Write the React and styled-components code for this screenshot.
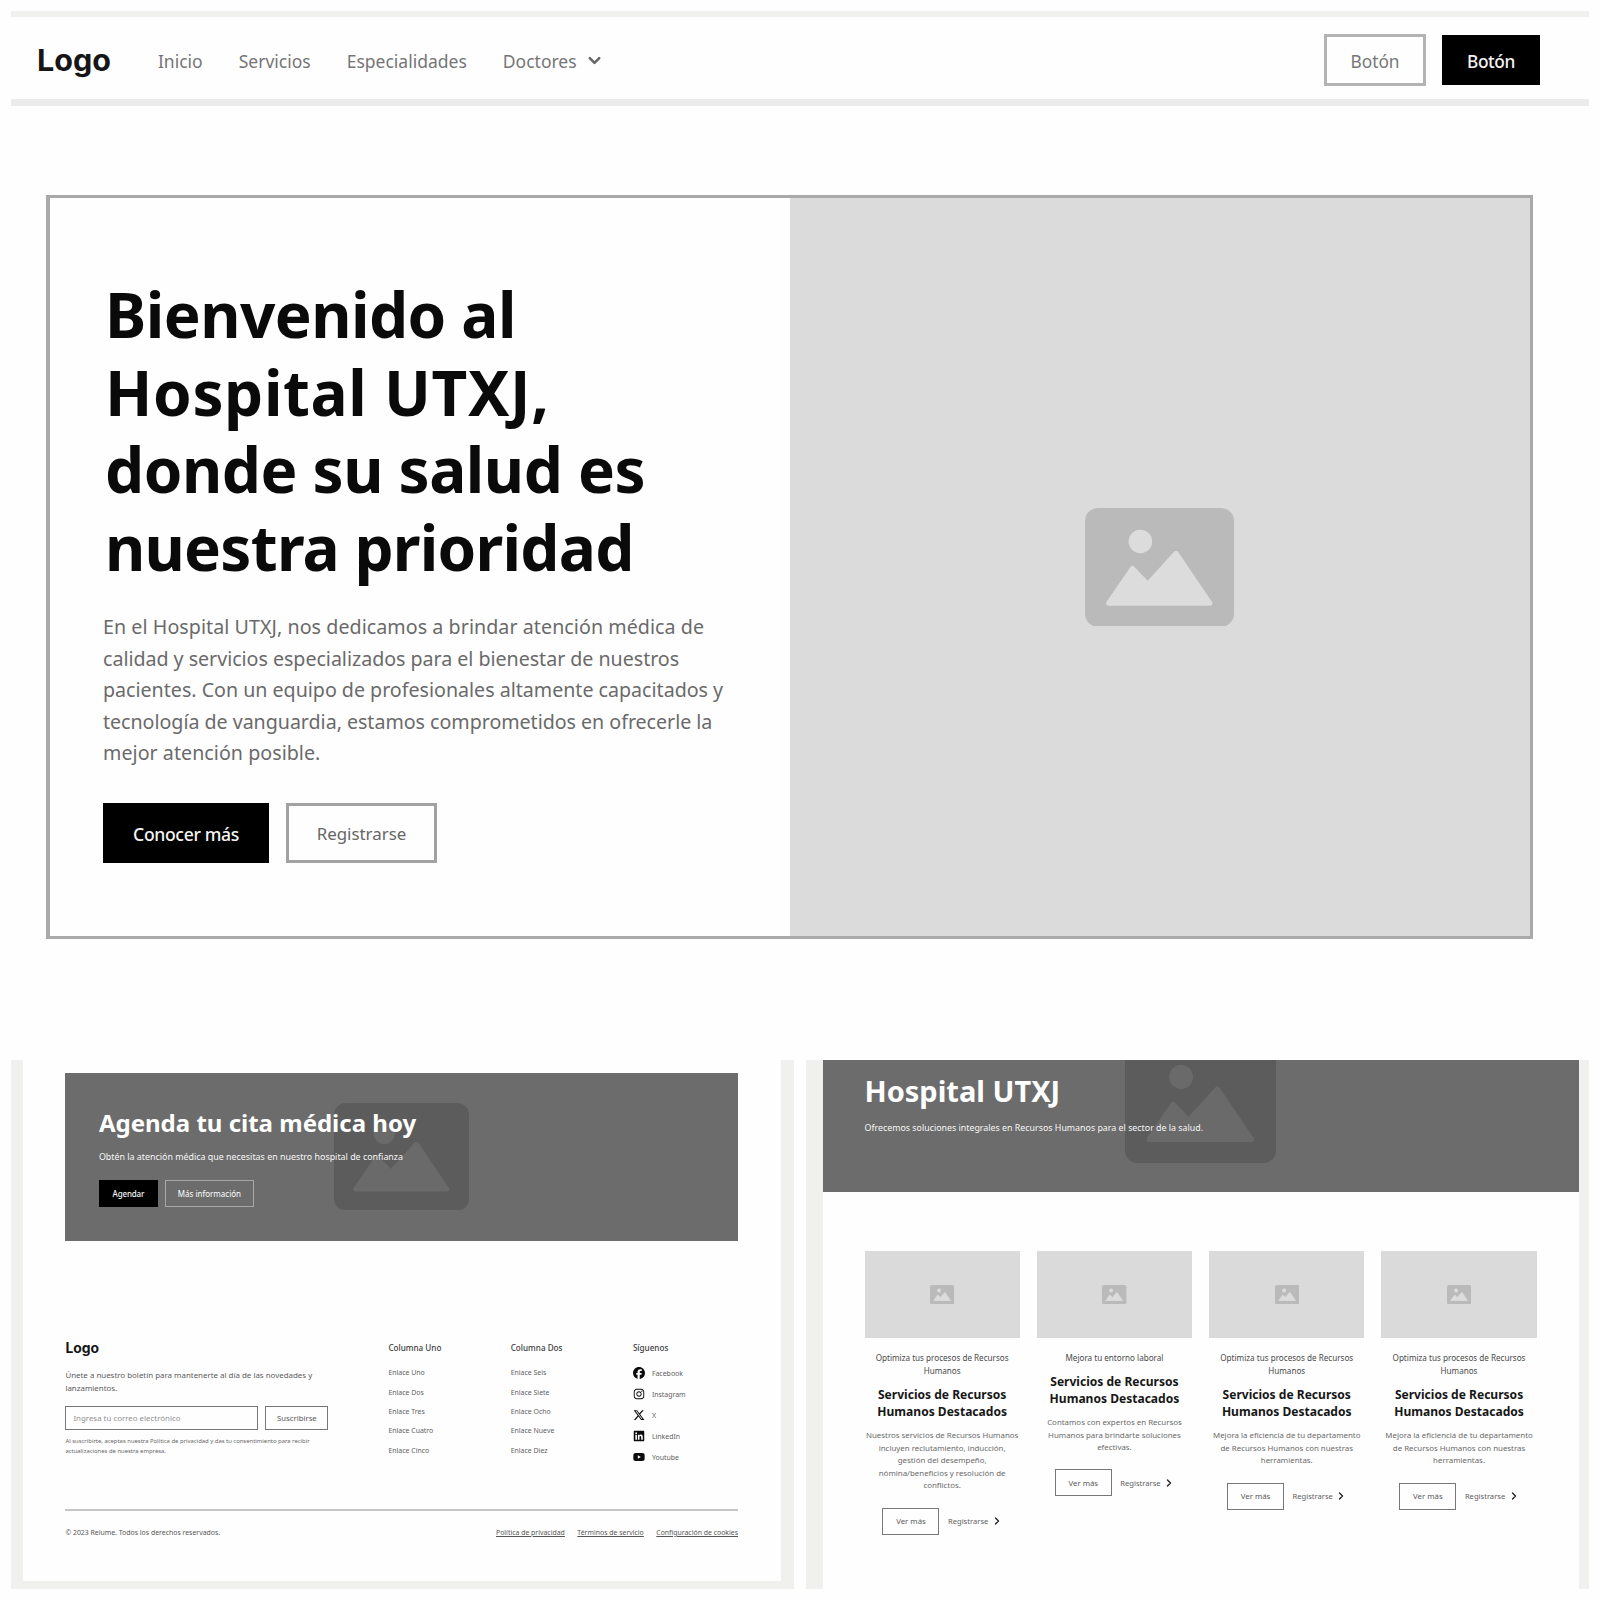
import React from "react";
import styled, { createGlobalStyle, css } from "styled-components";
import { ChevronDown, ChevronRight } from "lucide-react";
import { FaFacebook, FaInstagram, FaLinkedin, FaXTwitter, FaYoutube } from "react-icons/fa6";

const Global = createGlobalStyle`
  * { box-sizing: border-box; }
  body {
    margin: 0;
    background: #fefefe;
    color: #444;
    font-family: "Noto Sans", "Open Sans", sans-serif;
  }
  h1, h2, h3, h4, p, ul { margin: 0; padding: 0; }
  ul { list-style: none; }
  a { color: inherit; text-decoration: none; }
`;

const Board = styled.div`
  width: 1600px;
  height: 1600px;
  overflow: hidden;
  padding: 11px;
`;

/* ---------- shared ---------- */

const Logo = styled.span`
  display: block;
  font-family: "Inter", "Liberation Sans", sans-serif;
  font-weight: 700;
  font-size: ${(p) => p.$size}px;
  line-height: ${(p) => p.$size * 1.3}px;
  letter-spacing: ${(p) => p.$spacing || 0}px;
  color: #161616;
`;

const Line = styled.span`
  display: block;
  white-space: nowrap;
  letter-spacing: ${(p) => p.$spacing || 0}px;
`;

const Button = styled.button`
  display: flex;
  align-items: center;
  justify-content: center;
  flex: none;
  padding: ${(p) => p.$drop || 0}px 0 0;
  border-radius: 0;
  font-family: inherit;
  white-space: nowrap;
  width: ${(p) => p.$w}px;
  height: ${(p) => p.$h}px;
  font-size: ${(p) => p.$size}px;
  ${(p) =>
    p.$solid
      ? css`
          border: 0;
          background: #000;
          color: #f4f4f4;
          font-weight: 500;
          letter-spacing: -0.02em;
        `
      : css`
          border: ${p.$border || 1}px solid ${p.$line || "#777"};
          background: transparent;
          color: ${p.$ink || "#5a5a5a"};
        `}
`;

const Glyph = styled.svg`
  display: block;
  width: ${(p) => p.$w}px;
  height: ${(p) => (p.$w * 118) / 148}px;
`;

function ImageGlyph({ width, frame = "#bababa", art = "#dcdcdc" }) {
  return (
    <Glyph $w={width} viewBox="0 0 148 118" aria-hidden="true">
      <rect width="148" height="118" rx="13" fill={frame} />
      <circle cx="55" cy="33.3" r="11.7" fill={art} />
      <path
        d="M23.5 94.5 L47.2 60 L62.3 76 L90.5 45 L124 94.5 Z"
        fill={art}
        stroke={art}
        strokeWidth="5"
        strokeLinejoin="round"
      />
    </Glyph>
  );
}

/* ---------- navigation ---------- */

const TopStripe = styled.div`
  height: 6px;
  background: #f0f0ef;
`;

const NavBar = styled.header`
  display: flex;
  align-items: center;
  height: 89px;
  padding: 4px 49px 0 26px;
  border-bottom: 7px solid #ebebeb;
`;

const Menu = styled.nav`
  display: flex;
  gap: 36px;
  margin-left: 47px;
  padding-top: 1px;
  font-size: 17.5px;
  color: #757577;
`;

const MenuItem = styled.a`
  display: flex;
  align-items: center;
  gap: 8px;
`;

const NavActions = styled.div`
  display: flex;
  align-items: center;
  gap: 16px;
  margin-left: auto;
`;

/* ---------- hero ---------- */

const HeroArea = styled.section`
  height: 954px;
  padding: 89px 0 0 35px;
`;

const HeroCard = styled.div`
  display: grid;
  grid-template-columns: 740px 1fr;
  width: 1487px;
  height: 744px;
  border: 3px solid #a9a9a9;
  border-left-width: 4px;
`;

const HeroCopy = styled.div`
  padding: 78px 0 0 53px;
  background: #fefefe;
`;

const HeroTitle = styled.h1`
  padding-left: 2px;
  font-size: 62px;
  line-height: 77.6px;
  font-weight: 700;
  color: #0a0a0a;
`;

const HeroText = styled.p`
  margin-top: 24.6px;
  font-size: 19.65px;
  line-height: 31.6px;
  color: #6a6a6a;
`;

const HeroActions = styled.div`
  display: flex;
  gap: 17px;
  margin-top: 33.8px;
`;

const HeroImage = styled.div`
  display: flex;
  align-items: center;
  justify-content: center;
  padding-right: 2px;
  background: #dbdbdb;
`;

/* ---------- lower panels ---------- */

const Panels = styled.div`
  display: grid;
  grid-template-columns: 783px 783.5px;
  gap: 11.5px;
  height: 529px;
`;

const FooterPanel = styled.section`
  border: solid #f0f0ef;
  border-width: 0 13px 8px 12px;
  padding: 13px 43px 0 42.4px;
  background: #fefefe;
`;

const Banner = styled.div`
  position: relative;
  height: 168px;
  padding: 35px 0 0 33.5px;
  background: #6c6c6c;
  color: #f6f6f6;
`;

const Backdrop = styled.div`
  position: absolute;
  left: ${(p) => p.$x}px;
  top: ${(p) => p.$y}px;
`;

const Front = styled.div`
  position: relative;
`;

const BannerTitle = styled.h2`
  font-size: ${(p) => p.$size}px;
  line-height: ${(p) => p.$lh}px;
  font-weight: 700;
  white-space: nowrap;
  color: #fff;
`;

const BannerText = styled.p`
  margin-top: ${(p) => p.$gap}px;
  font-size: ${(p) => p.$size}px;
  line-height: 14px;
  white-space: nowrap;
`;

const BannerActions = styled.div`
  display: flex;
  gap: 7px;
  margin-top: 16px;
`;

const FooterGrid = styled.div`
  display: grid;
  grid-template-columns: 323px 122.3px 122.2px 1fr;
  height: 170px;
  margin-top: 98px;
`;

const Newsletter = styled.p`
  margin-top: 12px;
  font-size: 7.92px;
  line-height: 12.8px;
  color: #5c5c5c;
`;

const Form = styled.div`
  display: flex;
  gap: 7px;
  margin-top: 11.4px;
`;

const EmailField = styled.input`
  width: 193px;
  height: 24px;
  padding: 0 7px;
  border: 1px solid #777;
  border-radius: 0;
  background: transparent;
  font-family: inherit;
  font-size: 7.9px;
  &::placeholder { color: #929292; opacity: 1; }
`;

const Consent = styled.p`
  margin-top: 5.6px;
  font-size: 5.9px;
  line-height: 10.2px;
  color: #666;
`;

const Column = styled.div`
  padding-top: 3px;
`;

const ColumnTitle = styled.h4`
  font-size: 8.15px;
  line-height: 12px;
  font-weight: 500;
  color: #404040;
`;

const LinkList = styled.ul`
  margin-top: 9px;
  font-size: 6.95px;
  color: #5e5e5e;
`;

const LinkRow = styled.li`
  display: flex;
  align-items: center;
  gap: 7px;
  height: ${(p) => p.$h}px;
  svg { width: 12px; height: 12px; flex: none; color: #0c0c0c; }
`;

const FooterBottom = styled.div`
  display: flex;
  justify-content: space-between;
  padding-top: 17px;
  border-top: 2px solid #c6c6c6;
  font-size: 6.92px;
  line-height: 10px;
  white-space: nowrap;
  color: #555;
`;

const Legal = styled.div`
  display: flex;
  gap: 12.5px;
  a { text-decoration: underline; text-underline-offset: 1px; }
`;

/* ---------- services ---------- */

const ServicesPanel = styled.section`
  border: solid #f0f0ef;
  border-width: 0 10px 0 17px;
  background: #fefefe;
`;

const ServicesHero = styled.div`
  position: relative;
  overflow: hidden;
  height: 132px;
  padding: 13.5px 0 0 42px;
  background: #6c6c6c;
  color: #f6f6f6;
`;

const Cards = styled.div`
  display: grid;
  grid-template-columns: repeat(4, 155.3px);
  gap: 17px;
  padding: 59px 0 0 42px;
`;

const Card = styled.article`
  display: flex;
  flex-direction: column;
  align-items: center;
  text-align: center;
`;

const CardImage = styled.div`
  display: flex;
  align-items: center;
  justify-content: center;
  width: 100%;
  height: 87.3px;
  background: #dadada;
`;

const Tagline = styled.p`
  margin-top: 12.4px;
  font-size: 8.12px;
  line-height: 13.2px;
  color: #4a4a4a;
`;

const CardTitle = styled.h3`
  margin-top: 8.7px;
  font-size: 12.05px;
  line-height: 17.2px;
  font-weight: 700;
  color: #161616;
`;

const CardText = styled.p`
  margin-top: 9.3px;
  font-size: 7.88px;
  line-height: 12.45px;
  color: #6a6a6a;
`;

const CardActions = styled.div`
  display: flex;
  align-items: center;
  gap: 8.5px;
  margin-top: 15.8px;
  padding-left: 1px;
`;

const MoreLink = styled.a`
  display: flex;
  align-items: center;
  gap: 2.5px;
  font-size: 7.6px;
  color: #5e5e5e;
  svg { color: #222; }
`;

const heroTitle = [
  ["Bienvenido al", -0.55],
  ["Hospital UTXJ,", 0.6],
  ["donde su salud es", -0.5],
  ["nuestra prioridad", -0.75],
];

const heroText = [
  ["En el Hospital UTXJ, nos dedicamos a brindar atención médica de", 0.06],
  ["calidad y servicios especializados para el bienestar de nuestros", -0.03],
  ["pacientes. Con un equipo de profesionales altamente capacitados y", -0.01],
  ["tecnología de vanguardia, estamos comprometidos en ofrecerle la", -0.03],
  ["mejor atención posible.", 0.04],
];

const columns = [
  ["Columna Uno", ["Enlace Uno", "Enlace Dos", "Enlace Tres", "Enlace Cuatro", "Enlace Cinco"]],
  ["Columna Dos", ["Enlace Seis", "Enlace Siete", "Enlace Ocho", "Enlace Nueve", "Enlace Diez"]],
];

const social = [
  [FaFacebook, "Facebook"],
  [FaInstagram, "Instagram"],
  [FaXTwitter, "X"],
  [FaLinkedin, "LinkedIn"],
  [FaYoutube, "Youtube"],
];

const optimize = ["Optimiza tus procesos de Recursos", "Humanos"];
const improve = [
  "Mejora la eficiencia de tu departamento",
  "de Recursos Humanos con nuestras",
  "herramientas.",
];

const cards = [
  {
    tag: optimize,
    text: [
      "Nuestros servicios de Recursos Humanos",
      "incluyen reclutamiento, inducción,",
      "gestión del desempeño,",
      "nómina/beneficios y resolución de",
      "conflictos.",
    ],
  },
  {
    tag: ["Mejora tu entorno laboral"],
    text: [
      "Contamos con expertos en Recursos",
      "Humanos para brindarte soluciones",
      "efectivas.",
    ],
  },
  { tag: optimize, text: improve },
  { tag: optimize, text: improve },
];

const lines = (items) => items.map((t) => <Line key={t}>{t}</Line>);
const spacedLines = (items) =>
  items.map(([t, s]) => (
    <Line key={t} $spacing={s}>
      {t}
    </Line>
  ));

export default function App() {
  return (
    <>
      <Global />
      <Board>
        <TopStripe />
        <NavBar>
          <Logo $size={30.5}>Logo</Logo>
          <Menu>
            <MenuItem>Inicio</MenuItem>
            <MenuItem>Servicios</MenuItem>
            <MenuItem>Especialidades</MenuItem>
            <MenuItem>
              Doctores
              <ChevronDown size={19} strokeWidth={3.2} color="#666" />
            </MenuItem>
          </Menu>
          <NavActions>
            <Button $w={102} $h={52} $size={17.3} $drop={2} $border={3} $line="#b3b3b3" $ink="#777">
              Botón
            </Button>
            <Button $solid $w={98} $h={50} $size={17.3} $drop={2}>
              Botón
            </Button>
          </NavActions>
        </NavBar>

        <HeroArea>
          <HeroCard>
            <HeroCopy>
              <HeroTitle>{spacedLines(heroTitle)}</HeroTitle>
              <HeroText>{spacedLines(heroText)}</HeroText>
              <HeroActions>
                <Button $solid $w={166} $h={60} $size={17.6} $drop={2}>
                  Conocer más
                </Button>
                <Button $w={151} $h={60} $size={16.9} $drop={2} $border={3} $line="#a2a2a2" $ink="#666">
                  Registrarse
                </Button>
              </HeroActions>
            </HeroCopy>
            <HeroImage>
              <ImageGlyph width={149} />
            </HeroImage>
          </HeroCard>
        </HeroArea>

        <Panels>
          <FooterPanel>
            <Banner>
              <Backdrop $x={269} $y={29.5}>
                <ImageGlyph width={135} frame="#5c5c5c" art="#6a6a6a" />
              </Backdrop>
              <Front>
                <BannerTitle $size={24} $lh={30}>
                  Agenda tu cita médica hoy
                </BannerTitle>
                <BannerText $gap={12} $size={8.9}>
                  Obtén la atención médica que necesitas en nuestro hospital de confianza
                </BannerText>
                <BannerActions>
                  <Button $solid $w={59} $h={27} $size={8}>
                    Agendar
                  </Button>
                  <Button $w={89} $h={27} $size={8} $line="#a8a8a8" $ink="#fff">
                    Más información
                  </Button>
                </BannerActions>
              </Front>
            </Banner>

            <FooterGrid>
              <div>
                <Logo $size={13.9}>Logo</Logo>
                <Newsletter>
                  <Line>Únete a nuestro boletín para mantenerte al día de las novedades y</Line>
                  <Line>lanzamientos.</Line>
                </Newsletter>
                <Form>
                  <EmailField placeholder="Ingresa tu correo electrónico" />
                  <Button $w={63} $h={24} $size={7.75}>
                    Suscribirse
                  </Button>
                </Form>
                <Consent>
                  <Line>
                    Al suscribirte, aceptas nuestra Política de privacidad y das tu consentimiento para recibir
                  </Line>
                  <Line>actualizaciones de nuestra empresa.</Line>
                </Consent>
              </div>
              {columns.map(([title, links]) => (
                <Column key={title}>
                  <ColumnTitle>{title}</ColumnTitle>
                  <LinkList>
                    {links.map((l) => (
                      <LinkRow key={l} $h={19.4}>
                        {l}
                      </LinkRow>
                    ))}
                  </LinkList>
                </Column>
              ))}
              <Column>
                <ColumnTitle>Síguenos</ColumnTitle>
                <LinkList>
                  {social.map(([Icon, label]) => (
                    <LinkRow key={label} $h={20.9}>
                      <Icon />
                      {label}
                    </LinkRow>
                  ))}
                </LinkList>
              </Column>
            </FooterGrid>

            <FooterBottom>
              <span>© 2023 Relume. Todos los derechos reservados.</span>
              <Legal>
                <a>Política de privacidad</a>
                <a>Términos de servicio</a>
                <a>Configuración de cookies</a>
              </Legal>
            </FooterBottom>
          </FooterPanel>

          <ServicesPanel>
            <ServicesHero>
              <Backdrop $x={302.5} $y={-17}>
                <ImageGlyph width={151} frame="#5c5c5c" art="#6a6a6a" />
              </Backdrop>
              <Front>
                <BannerTitle $size={29} $lh={34}>
                  Hospital UTXJ
                </BannerTitle>
                <BannerText $gap={13} $size={8.85}>
                  Ofrecemos soluciones integrales en Recursos Humanos para el sector de la salud.
                </BannerText>
              </Front>
            </ServicesHero>
            <Cards>
              {cards.map((card, i) => (
                <Card key={i}>
                  <CardImage>
                    <ImageGlyph width={24.4} />
                  </CardImage>
                  <Tagline>{lines(card.tag)}</Tagline>
                  <CardTitle>{lines(["Servicios de Recursos", "Humanos Destacados"])}</CardTitle>
                  <CardText>{lines(card.text)}</CardText>
                  <CardActions>
                    <Button $w={57} $h={27} $size={7.8}>
                      Ver más
                    </Button>
                    <MoreLink>
                      Registrarse
                      <ChevronRight size={12} strokeWidth={2.8} />
                    </MoreLink>
                  </CardActions>
                </Card>
              ))}
            </Cards>
          </ServicesPanel>
        </Panels>
      </Board>
    </>
  );
}
